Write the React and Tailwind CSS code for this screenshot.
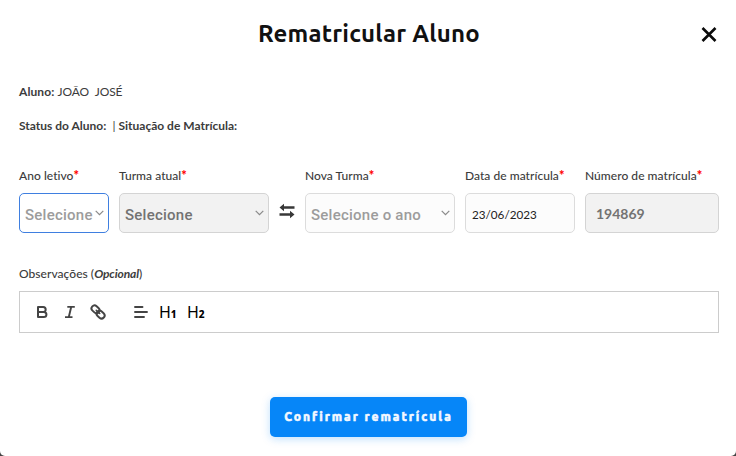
import React from 'react';

function Label({ children }) {
  return (
    <label className="block h-4 text-[12px] leading-4 tracking-[0.04px] font-medium text-[#3c3c3c] whitespace-nowrap">
      {children}
      <span className="text-[#ff0000] text-[13px] leading-none font-black">*</span>
    </label>
  );
}

function Chevron() {
  return (
    <svg className="w-[9px] h-[6px] shrink-0 -mt-px" viewBox="0 0 9 6" fill="none" stroke="#8a8a8a" strokeWidth="1.2">
      <path d="M0.7 0.8L4.5 4.7L8.3 0.8" />
    </svg>
  );
}

function SelectField({ label, value, width, box }) {
  return (
    <div className={width}>
      <Label>{label}</Label>
      <div className={`mt-[9px] h-10 rounded-[5px] border pl-[5px] pr-1 flex items-center justify-between ${box}`}>
        <span className="font-['Roboto',sans-serif] font-medium text-[15px] tracking-[0.24px] whitespace-nowrap pt-[4px]">{value}</span>
        <Chevron />
      </div>
    </div>
  );
}

function Toolbar() {
  return (
    <div className="mt-[9px] h-[42px] border border-[#ccc] flex items-center pl-[15px] text-[#444]">
      <svg className="w-[14px] h-[14px]" viewBox="0 0 14 14" fill="none" stroke="currentColor" strokeWidth="2">
        <path d="M3 2H8.2C11.5 2 11.5 7 8.2 7H3ZM3 7H8.8C12.3 7 12.3 12 8.8 12H3Z" strokeLinejoin="round" />
      </svg>
      <svg className="w-[14px] h-[14px] ml-[14px]" viewBox="0 0 14 14" fill="none" stroke="currentColor" strokeWidth="1.9">
        <path d="M4.3 1.9H11.8M2 12.1H9.5M8.2 2L5.8 12" />
      </svg>
      <svg className="w-4 h-4 ml-[13px]" viewBox="0 0 16 16" fill="none" stroke="currentColor" strokeWidth="2">
        <rect x="1.2" y="2.3" width="8.6" height="6" rx="3" transform="rotate(43 5.5 5.3)" />
        <rect x="6.3" y="7.6" width="8.6" height="6" rx="3" transform="rotate(43 10.6 10.6)" />
        <path d="M6.3 6.3L9.7 9.5" strokeLinecap="round" strokeWidth="1.6" />
      </svg>
      <svg className="w-[14px] h-[14px] ml-[28px]" viewBox="0 0 14 14" stroke="currentColor" strokeWidth="1.9" strokeLinecap="round">
        <path d="M1 2H8.5M1 7H13M1 12H10" />
      </svg>
      <span className="ml-[11px] w-[28px] pt-0.5 font-['Noto_Sans',sans-serif] text-[16px] leading-5 text-black">
        H<span className="text-[10px] font-extrabold">1</span>
      </span>
      <span className="pt-0.5 font-['Noto_Sans',sans-serif] text-[16px] leading-5 text-black">
        H<span className="text-[10px] font-extrabold">2</span>
      </span>
    </div>
  );
}

export default function App() {
  return (
    <div className="w-[736px] h-[456px] bg-[#444] overflow-hidden">
      <div className="h-full bg-white rounded-b-[5px] pr-[17px] pl-[19px] flex flex-col font-['Lato',sans-serif] text-[#3c3c3c]">
        <header className="h-[68px] grid grid-cols-[20px_1fr_20px] items-center">
          <span />
          <h1 className="text-center font-['Ubuntu','Noto_Sans',sans-serif] font-semibold text-2xl tracking-[0.2px] text-[#111]">
            Rematricular Aluno
          </h1>
          <button aria-label="Fechar" className="flex justify-center">
            <svg className="w-4 h-4" viewBox="0 0 16 16" fill="none" stroke="#0a0a0a" strokeWidth="2.6">
              <path d="M1.5 2L14.5 15M14.5 2L1.5 15" />
            </svg>
          </button>
        </header>

        <p className="mt-4 h-4 text-[12px] leading-4 whitespace-pre">
          <b className="tracking-[0.1px]">Aluno:</b> <span className="tracking-[-0.1px]">JOÃO  JOSÉ</span>
        </p>
        <p className="mt-[18px] h-4 text-[12px] leading-4 whitespace-pre">
          <b>Status do Aluno:</b>  | <b>Situação de Matrícula:</b>
        </p>

        <div className="mt-[34px] flex">
          <SelectField label="Ano letivo" value="Selecione" width="w-[90px]" box="border-[#3f7fe0] bg-white text-[#9c9c9c]" />
          <SelectField label="Turma atual" value="Selecione" width="w-[150px] ml-[10px]" box="border-[#d4d4d4] bg-[#f2f2f2] text-[#737373]" />
          <div className="w-9 pt-[25px] h-[65px] flex items-center justify-center">
            <svg className="w-4 h-4 -mt-1" viewBox="0 0 16 16" fill="#383838">
              <path d="M0.5 4.5L5 0.8V3.2H15.5V5.8H5V8.2ZM15.5 11.5L11 7.8V10.2H0.5V12.8H11V15.2Z" />
            </svg>
          </div>
          <SelectField label="Nova Turma" value="Selecione o ano" width="w-[150px]" box="border-[#dcdcdc] bg-[#fcfcfc] text-[#9c9c9c]" />
          <div className="w-[110px] ml-[10px]">
            <Label>Data de matrícula</Label>
            <div className="mt-[9px] h-10 rounded-[5px] border border-[#dcdcdc] bg-[#fcfcfc] pl-[6px] pt-[4px] flex items-center text-[11.7px] text-[#222]">
              23/06/2023
            </div>
          </div>
          <div className="w-[134px] ml-[10px]">
            <Label>Número de matrícula</Label>
            <div className="mt-[9px] h-10 rounded-[5px] border border-[#d4d4d4] bg-[#f2f2f2] pl-[10px] pt-[1px] flex items-center text-[14px] font-bold text-[#737373]">
              194869
            </div>
          </div>
        </div>

        <div className="mt-[33px] w-[700px]">
          <p className="h-4 text-[12px] leading-4 font-medium tracking-[0.04px]">
            Observações (<i className="font-bold tracking-[-0.1px]">Opcional</i>)
          </p>
          <Toolbar />
        </div>

        <button className="mt-16 ml-[251px] w-[197px] h-10 rounded-[5px] bg-[#0686f8] text-[#f4f8ff] text-[12px] font-extrabold tracking-[1.98px] [-webkit-text-stroke:0.5px_#f4f8ff] font-['Ubuntu','Noto_Sans',sans-serif] whitespace-nowrap shadow-[0_2px_8px_rgba(6,134,248,0.25)]">
          Confirmar rematrícula
        </button>
      </div>
    </div>
  );
}
